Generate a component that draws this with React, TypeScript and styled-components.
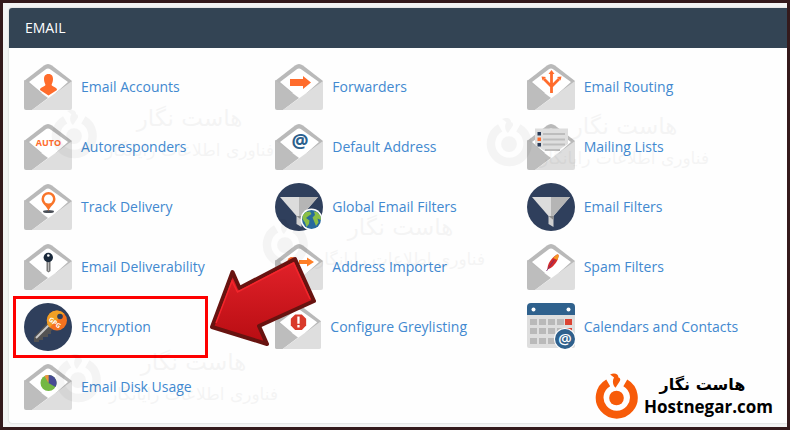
import React from "react";
import styled, { createGlobalStyle, css } from "styled-components";

const GlobalStyle = createGlobalStyle`
  *, *::before, *::after { box-sizing: border-box; }
  body { margin: 0; background: #341a1c; font-family: "Open Sans", "Noto Sans", sans-serif; }
`;

const Frame = styled.main`
  position: relative;
  min-height: 100vh;
  padding: 5px 0 4px 6px;
  border: 3px solid #341a1c;
  border-bottom-width: 4px;
  background: #f3f4f4;
  overflow: hidden;
`;

const Panel = styled.section`
  border-radius: 3px 0 0 3px;
  background: #fefefe;
  box-shadow: 0 0 2px rgba(0, 0, 0, 0.2);
`;

const PanelHeader = styled.h2`
  margin: 0;
  padding: 0 16px;
  border-radius: 3px 0 0 0;
  background: #334454;
  color: #fff;
  font-size: 14px;
  font-weight: 400;
  line-height: 40px;
`;

const Grid = styled.ul`
  display: grid;
  grid-template-columns: repeat(3, 1fr);
  margin: 0;
  padding: 9px 20px 6px 4px;
  list-style: none;
`;

const Cell = styled.li<{ $marked?: boolean }>`
  display: flex;
  align-items: center;
  height: 60px;
  padding-left: 11px;
  ${(p) =>
    p.$marked &&
    css`
      height: 62px;
      margin: -1px 56px -1px 0;
      padding-left: 8px;
      border: 3px solid #fe0000;
    `}
`;

const Feature = styled.a`
  display: flex;
  align-items: center;
  gap: 9px;
  color: #4289d0;
  font-size: 14px;
  line-height: 20px;
  text-decoration: none;
  white-space: nowrap;
`;

const Icon = styled.svg<{ $size?: number }>`
  display: block;
  flex: none;
  width: ${(p) => p.$size ?? 48}px;
  height: ${(p) => p.$size ?? 48}px;
`;

const Overlay = styled.div<{ $x: number; $y: number }>`
  position: absolute;
  left: ${(p) => p.$x}px;
  top: ${(p) => p.$y}px;
  pointer-events: none;
`;

const Watermark = styled(Overlay)`
  display: flex;
  align-items: center;
  gap: 8px;
  opacity: 0.035;
  color: #000;
`;

const WatermarkText = styled.div`
  display: flex;
  flex-direction: column;
  align-items: center;
  direction: rtl;
  font-family: "DejaVu Sans", sans-serif;
  font-size: 17px;
  line-height: 32px;
  white-space: nowrap;
`;

const WatermarkTitle = styled.span`
  font-size: 23px;
`;

const Brand = styled.a`
  position: absolute;
  right: 14px;
  bottom: 8px;
  display: flex;
  align-items: center;
  gap: 6px;
  color: #000;
  text-decoration: none;
`;

const BrandText = styled.div`
  display: flex;
  flex-direction: column;
  align-items: center;
  font-size: 17px;
  font-weight: 700;
  line-height: 22px;
`;

const BrandPersian = styled.span`
  padding-right: 12px;
  font-family: "DejaVu Sans", sans-serif;
  font-size: 16px;
  direction: rtl;
`;

function Envelope({ children }: { children?: React.ReactNode }) {
  return (
    <>
      <path d="M0 18 L20 2.500 Q24 -0.500 28 2.500 L48 18 V30 H0Z" fill="#b9b9b9" />
      <path d="M5 19 L21.500 6.500 Q24 4.500 26.500 6.500 L44 19 L25 36Z" fill="#fff" />
      <path d="M0 17 L24 35 L8 47 H2 Q0 47 0 45Z" fill="#bdbdbd" />
      <path d="M48 18 V45 Q48 47 46 47 H8Z" fill="#dedede" />
      {children}
    </>
  );
}

function Funnel() {
  return (
    <>
      <circle cx="24" cy="24" r="24" fill="#2f3f5c" />
      <path d="M5 14 H43 L26.500 33 H21.500Z" fill="#dcdcdc" />
      <path d="M24 14 H43 L26.500 33 H24Z" fill="#b5b5b5" />
      <path d="M21.500 33 H26.500 V44 L21.500 41Z" fill="#cfcfcf" />
      <path d="M21.500 33 H26.500 V37Z" fill="#8d8d8d" />
    </>
  );
}

const art: Record<string, React.ReactNode> = {
  person: (
    <Envelope>
      <path d="M24.500 11 C28 11 29 13.500 29 16 C29 19 28 20 27.500 22 C29 24 33 24 33 27 L24.500 32.500 L16 27 C16 24 20 24 21.500 22 C21 20 20 19 20 16 C20 13.500 21 11 24.500 11Z" fill="#ff6c2c" />
    </Envelope>
  ),
  forward: (
    <Envelope>
      <path d="M15 16 H28 V13 L36 19.500 L28 26 V23 H15Z" fill="#ff6c2c" />
    </Envelope>
  ),
  routing: (
    <Envelope>
      <path d="M24.500 30 V10 M24.500 23.500 L17 16 M24.500 23.500 L32 16" stroke="#ff6c2c" strokeWidth="2.800" fill="none" />
      <path d="M24.500 7 L27.500 11 H21.500Z M14.500 13.500 L19 14 L15.500 17.500Z M34.500 13.500 L30 14 L33.500 17.500Z" fill="#ff6c2c" />
    </Envelope>
  ),
  auto: (
    <Envelope>
      <text x="24.500" y="22.500" textAnchor="middle" fontFamily="Open Sans" fontWeight="700" fontSize="9" fill="#ff6c2c">AUTO</text>
    </Envelope>
  ),
  at: (
    <Envelope>
      <text x="25" y="25" textAnchor="middle" fontFamily="Open Sans" fontWeight="700" fontSize="19" fill="#2c618d">@</text>
    </Envelope>
  ),
  list: (
    <Envelope>
      <path d="M8 5.500 H41 V21 L30 28 H18 L8 22Z" fill="#dedede" />
      <path d="M16 11 H38 M16 16.500 H38 M16 21.500 H38 M18 27 H33" stroke="#bdbdbd" strokeWidth="2" />
      <path d="M10.500 9 h3.500 v3.500 h-3.500z M10.500 20 h3.500 v3.500 h-3.500z" fill="#293a57" />
      <path d="M10.500 14.500 h3.500 v3.500 h-3.500z" fill="#ff6c2c" />
    </Envelope>
  ),
  pin: (
    <Envelope>
      <ellipse cx="24.500" cy="28.500" rx="5.500" ry="1.500" fill="#4b5058" />
      <path d="M24.500 28 C23 23 17.500 21 17.500 16 A7 7 0 0 1 31.500 16 C31.500 21 26 23 24.500 28Z" fill="#f9752a" />
      <circle cx="24.500" cy="16" r="4.500" fill="#fff" />
    </Envelope>
  ),
  key: (
    <Envelope>
      <path d="M22.500 18 H26.500 V28 L24.500 29.500 L22.500 28Z" fill="#777" />
      <path d="M24.500 18 V28" stroke="#bbb" />
      <circle cx="24.300" cy="14.500" r="4.700" fill="#1b2a3c" />
      <circle cx="24.300" cy="12.500" r="1.300" fill="#fff" />
    </Envelope>
  ),
  importer: (
    <Envelope>
      <circle cx="17" cy="18.500" r="4.500" fill="#ff6c2c" />
      <path d="M24 17 H32 V14.500 L39 19 L32 23.500 V21 H24Z" fill="#ff7f27" />
    </Envelope>
  ),
  feather: (
    <Envelope>
      <path d="M20.500 26.500 C20 21 25 14 30 11.500 C32.500 11 31.500 14 30.500 17 C28.500 21 25 25 20.500 26.500Z" fill="#d42c2c" />
      <path d="M26 15 L30 11.500 C32.500 11 31.500 14 30.500 17Z" fill="#f69923" />
      <path d="M19.500 28 L27 17" stroke="#6d2a6e" strokeWidth="0.800" />
    </Envelope>
  ),
  alert: (
    <Envelope>
      <path d="M21 11 H28 L32.500 15.500 V22.500 L28 27 H21 L16.500 22.500 V15.500Z" fill="#d93a2b" />
      <path d="M24.500 13 V20.500 M24.500 22 V24.500" stroke="#fff" strokeWidth="2.400" />
    </Envelope>
  ),
  pie: (
    <Envelope>
      <circle cx="24.500" cy="20" r="8" fill="#74b843" />
      <path d="M24.500 20 V12 A8 8 0 0 1 31.500 24Z" fill="#474b94" />
      <path d="M24.500 20 L20.500 13 A8 8 0 0 1 24.500 12Z" fill="#f2913d" />
    </Envelope>
  ),
  funnel: <Funnel />,
  globe: (
    <>
      <Funnel />
      <circle cx="36.500" cy="36.500" r="11" fill="#fff" />
      <circle cx="36.500" cy="36.500" r="9.500" fill="#286a9d" />
      <path d="M28 32 L31 29 L35 28.500 L36.500 31 L33.500 33 L31 35 L34.500 37.500 L34 41 L31.500 44 L30 39.500 L27.500 36Z M39 28.500 L42 29 L45.500 33 L46 37 L42.500 35.500 L43.500 39.500 L41 43 L39 38 L37.500 34.500 L40 32Z" fill="#8abf45" />
    </>
  ),
  gpg: (
    <>
      <circle cx="24" cy="24" r="24" fill="#2f3f5c" />
      <path d="M24 19 L30 25 L27 28 V31 L24 31 V34 L19 34 V37 L15 37 L15 39 L10 39 V34Z" fill="#535252" />
      <path d="M12 35 L26 21" stroke="#c9c9c9" strokeWidth="2" />
      <circle cx="33" cy="17.500" r="10" fill="#f5721f" />
      <path d="M25.500 24.500 A10 10 0 0 1 40 10.500Z" fill="#f2a024" />
      <circle cx="36" cy="13.500" r="2.800" fill="#2f3f5c" />
      <text x="31" y="22" textAnchor="middle" transform="rotate(38 31 19.500)" fontFamily="Open Sans" fontWeight="700" fontSize="6.500" fill="#fff">GPG</text>
    </>
  ),
  calendar: (
    <>
      <path d="M0 10 H48 V43 Q48 45 46 45 H2 Q0 45 0 43Z" fill="#dedede" />
      <path d="M0 12 V4 Q0 0 4 0 H44 Q48 0 48 4 V12Z" fill="#2f618d" />
      <circle cx="6.500" cy="6.500" r="2" fill="#fff" />
      <circle cx="41.500" cy="6.500" r="2" fill="#fff" />
      {[16, 25, 35].map((y) =>
        [3, 12, 21, 30, 38].map((x) => (
          <rect key={`${x}-${y}`} x={x} y={y} width="7" height="6" fill={x === 38 ? "#dc4433" : "#b9b9b9"} />
        ))
      )}
      <circle cx="38" cy="36" r="11" fill="#fff" />
      <circle cx="38" cy="36" r="10" fill="#2f618d" />
      <text x="38" y="41" textAnchor="middle" fontFamily="Open Sans" fontWeight="600" fontSize="15" fill="#fff">@</text>
    </>
  ),
};

type Item = { label: string; icon: string; marked?: boolean; size?: number };

const items: Item[] = [
  { label: "Email Accounts", icon: "person" },
  { label: "Forwarders", icon: "forward" },
  { label: "Email Routing", icon: "routing" },
  { label: "Autoresponders", icon: "auto" },
  { label: "Default Address", icon: "at" },
  { label: "Mailing Lists", icon: "list" },
  { label: "Track Delivery", icon: "pin" },
  { label: "Global Email Filters", icon: "globe" },
  { label: "Email Filters", icon: "funnel" },
  { label: "Email Deliverability", icon: "key" },
  { label: "Address Importer", icon: "importer" },
  { label: "Spam Filters", icon: "feather" },
  { label: "Encryption", icon: "gpg", marked: true },
  { label: "Configure Greylisting", icon: "alert", size: 46 },
  { label: "Calendars and Contacts", icon: "calendar" },
  { label: "Email Disk Usage", icon: "pie" },
];

const watermarks = [
  { x: 48, y: 99 },
  { x: 483, y: 107 },
  { x: 259, y: 208 },
  { x: 52, y: 343 },
];

function RingLogo({ color, width, height }: { color: string; width: number; height: number }) {
  return (
    <svg width={width} height={height} viewBox="0 0 44 47" aria-hidden="true">
      <path d="M31 10 A17.500 17.500 0 1 1 13.500 10" fill="none" stroke={color} strokeWidth="8" />
      <circle cx="22" cy="25.500" r="7.500" fill={color} />
      <path d="M15.500 1.500 C20 -0.500 24 1 24 4.500 C26 5 26.500 7 25 9 L21 15 C18 12 17.500 8 19.500 4.500 C18 3.500 17 2.500 15.500 1.500Z" fill={color} />
    </svg>
  );
}

export default function App() {
  return (
    <>
      <GlobalStyle />
      <Frame>
        <Panel>
          <PanelHeader>EMAIL</PanelHeader>
          <Grid>
            {items.map((item) => (
              <Cell key={item.label} $marked={item.marked}>
                <Feature href="#">
                  <Icon $size={item.size} viewBox="0 0 48 48" aria-hidden="true">
                    {art[item.icon]}
                  </Icon>
                  {item.label}
                </Feature>
              </Cell>
            ))}
          </Grid>
        </Panel>
        {watermarks.map((mark) => (
          <Watermark key={`${mark.x}-${mark.y}`} $x={mark.x} $y={mark.y} aria-hidden="true">
            <RingLogo color="#000" width={46} height={50} />
            <WatermarkText>
              <WatermarkTitle>هاست نگار</WatermarkTitle>
              <span>فناوری اطلاعات رایانگار</span>
            </WatermarkText>
          </Watermark>
        ))}
        <Overlay $x={205} $y={250}>
          <svg width="112" height="100" viewBox="208 253 112 100" aria-hidden="true">
            <defs>
              <linearGradient id="arrowFill" x1="0" y1="0" x2="0" y2="1">
                <stop offset="0" stopColor="#e2222a" />
                <stop offset="1" stopColor="#b80d12" />
              </linearGradient>
            </defs>
            <path
              d="M212 327 L232.500 272 L239.500 288 L295 259 L314 301 L259 326 L267 344Z"
              fill="url(#arrowFill)"
              stroke="#681310"
              strokeWidth="4"
              strokeLinejoin="round"
            />
            <path
              d="M216 323 L232 281 L237.500 292 L293.500 263 L310 299"
              fill="none"
              stroke="#f3262c"
              strokeWidth="1.500"
            />
          </svg>
        </Overlay>
        <Brand href="#">
          <RingLogo color="#f75b09" width={43} height={46} />
          <BrandText>
            <BrandPersian>هاست نگار</BrandPersian>
            <span>Hostnegar.com</span>
          </BrandText>
        </Brand>
      </Frame>
    </>
  );
}
